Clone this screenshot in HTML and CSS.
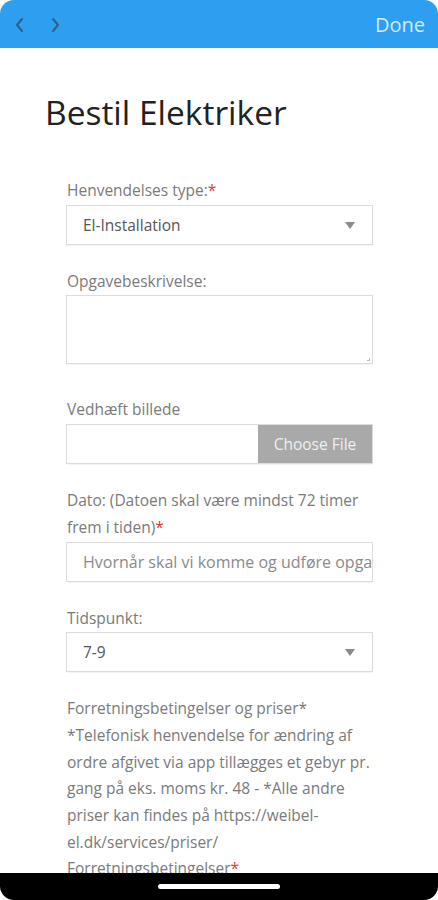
FILE: index.html
```html
<!DOCTYPE html>
<html lang="da">
<head>
<meta charset="utf-8">
<title>Bestil Elektriker</title>
<link rel="stylesheet" href="styles.css">
</head>
<body>
<header class="topbar">
  <div class="nav">
    <svg class="chev" width="12" height="16" viewBox="0 0 12 16"><path d="M8 2 L3 8 L8 14" fill="none" stroke="#2c5f8a" stroke-width="2" stroke-linecap="round" stroke-linejoin="round"/></svg>
    <svg class="chev" width="12" height="16" viewBox="0 0 12 16"><path d="M4 2 L9 8 L4 14" fill="none" stroke="#2c5f8a" stroke-width="2" stroke-linecap="round" stroke-linejoin="round"/></svg>
  </div>
  <span class="done">Done</span>
</header>
<main class="page">
  <h1 class="title">Bestil Elektriker</h1>
  <form class="form">
    <div class="field">
      <div class="label">Henvendelses type:<span class="req">*</span></div>
      <div class="box select"><span>El-Installation</span><span class="arrow"></span></div>
    </div>
    <div class="field field-area">
      <div class="label">Opgavebeskrivelse:</div>
      <div class="box area"><span class="grip"></span></div>
    </div>
    <div class="field">
      <div class="label">Vedhæft billede</div>
      <div class="box file"><span class="file-empty"></span><span class="choose">Choose File</span></div>
    </div>
    <div class="field">
      <div class="label">Dato: (Datoen skal være mindst 72 timer frem i tiden)<span class="req">*</span></div>
      <div class="box input"><span class="placeholder">Hvornår skal vi komme og udføre opgaven</span></div>
    </div>
    <div class="field">
      <div class="label">Tidspunkt:</div>
      <div class="box select"><span>7-9</span><span class="arrow"></span></div>
    </div>
    <div class="field">
      <div class="label para">Forretningsbetingelser og priser*<br>*Telefonisk henvendelse for ændring af ordre afgivet via app tillægges et gebyr pr. gang på eks. moms kr. 48 - *Alle andre priser kan findes på https://weibel-el.dk/services/priser/ Forretningsbetingelser<span class="req">*</span></div>
    </div>
  </form>
</main>
<div class="homebar"><span class="indicator"></span></div>
</body>
</html>
```
FILE: styles.css
```css
* { box-sizing: border-box; }
html, body { margin: 0; padding: 0; background: #fff; }
body {
  font-family: "Open Sans", "Liberation Sans", sans-serif;
  width: 438px;
  height: 900px;
  overflow: hidden;
}
.topbar {
  height: 48px;
  background: #2e9ff0;
  border-radius: 14px 14px 0 0;
  display: flex;
  align-items: center;
  justify-content: space-between;
  padding: 0 13px 0 14px;
}
.nav { display: flex; gap: 23px; align-items: center; padding-top: 2px; }
.chev { display: block; }
.done {
  color: #d3ebfd;
  font-size: 20px;
  line-height: 24px;
  padding-top: 2px;
}
.page { padding: 42px 0 0 0; }
.title {
  margin: 0 0 43px 45px;
  font-size: 33.5px;
  font-weight: 400;
  line-height: 44px;
  color: #222;
}
.form {
  margin: 0 65px 0 66px;
}
.field { margin-bottom: 23px; }
.field-area { margin-bottom: 32px; }
.label {
  font-size: 15.5px;
  line-height: 26.7px;
  color: #7a7a7a;
  padding-left: 1px;
  margin-bottom: 1px;
}
.para { margin-right: -3px; }
.req { color: #e53935; }
.box {
  border: 1px solid #dcdcdc;
  background: #fff;
  height: 40px;
  display: flex;
  align-items: center;
  font-size: 15.5px;
  color: #555;
  box-shadow: 0 1px 1px rgba(0,0,0,0.04);
}
.select { padding: 0 17px 0 16px; justify-content: space-between; }
.arrow {
  width: 0; height: 0;
  border-left: 5px solid transparent;
  border-right: 5px solid transparent;
  border-top: 7px solid #8a8a8a;
  margin-top: 1px;
}
.area { height: 69px; position: relative; }
.grip {
  position: absolute; right: 2px; bottom: 2px;
  width: 3px; height: 3px;
  border-right: 1px solid #bbb; border-bottom: 1px solid #bbb;
}
.file { padding: 0; justify-content: space-between; }
.file-empty { flex: 1; }
.choose {
  width: 114px;
  height: 38px;
  background: #a9a9a9;
  color: #efefef;
  display: flex;
  align-items: center;
  justify-content: center;
  font-size: 15.5px;
}
.input { padding: 0 0 0 16px; overflow: hidden; }
.placeholder { color: #8a8a8a; white-space: nowrap; font-size: 16px; }
.homebar {
  position: fixed;
  left: 0; right: 0; bottom: 0;
  height: 27px;
  background: #000;
  border-radius: 0 0 14px 14px;
  display: flex;
  justify-content: center;
  padding-top: 11px;
}
.indicator {
  width: 122px; height: 5px;
  background: #fff;
  border-radius: 3px;
}
```
